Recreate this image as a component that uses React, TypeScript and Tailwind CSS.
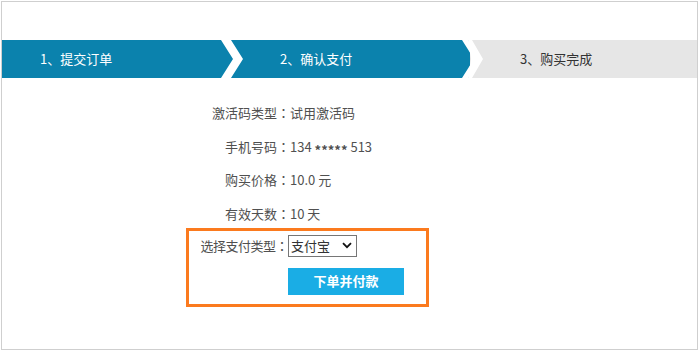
import React from "react";

const font = { fontFamily: '"Noto Sans CJK SC", "Noto Sans", sans-serif' };

function Colon() {
  return <span className="font-['Noto_Sans_CJK_JP',sans-serif]">：</span>;
}

function Row({ label, value }: { label: string; value: React.ReactNode }) {
  return (
    <div className="flex h-5 items-center text-[13px] text-[#505050]">
      <div className="w-[104px] text-right">
        {label}
        <Colon />
      </div>
      <div>{value}</div>
    </div>
  );
}

export default function App() {
  return (
    <div className="h-[351px] w-[700px] bg-white pl-px pt-px" style={font}>
      <div className="relative h-[349px] w-[697px] border border-[#cfcfcf]">
        {/* step bar */}
        <div className="relative mt-[38px] flex h-[38px] text-[13px]">
          <div className="flex w-[228px] items-center bg-[#0b82ad] pl-[38px] text-white">1、提交订单</div>
          <div className="flex w-[240px] items-center bg-[#0b82ad] pl-[50px] text-white">2、确认支付</div>
          <div className="flex flex-1 items-center bg-[#e6e6e6] pl-[50px] text-[#333]">3、购买完成</div>
          <svg className="absolute left-0 top-0" width="695" height="38" viewBox="0 0 695 38">
            <polygon points="219,0 229,0 241,19 229,38 219,38 231,19" fill="#ffffff" />
            <polygon points="466,0 469,19 466,38 470,38 481,19 470,0" fill="#ffffff" />
            <polygon points="460,0 466,0 478,19 466,38 460,38 472,19" fill="#ffffff" />
          </svg>
        </div>

        {/* form */}
        <div className="ml-[184px] mt-[25px] flex flex-col gap-[13.5px]">
          <Row label="激活码类型" value="试用激活码" />
          <Row
            label="手机号码"
            value={
              <>
                134 <span className="inline-block translate-y-[3px] font-bold">*****</span> 513
              </>
            }
          />
          <Row label="购买价格" value="10.0 元" />
          <Row label="有效天数" value="10 天" />
        </div>

        <div className="ml-[184px] mt-[4px] h-[79px] w-[243px] border-[3px] border-[#fb7a1e] pt-[4px]">
          <div className="flex h-[22px] items-center text-[13px] text-[#505050]">
            <div className="w-[99px] text-right tracking-[-0.5px]">
              选择支付类型
              <Colon />
            </div>
            <div className="relative">
              <select className="h-[22px] w-[69px] appearance-none border border-[#767676] bg-white pl-[2px] text-[13px] text-[#333] outline-none">
                <option>支付宝</option>
              </select>
              <svg className="pointer-events-none absolute right-[5px] top-[7px]" width="10" height="7" viewBox="0 0 10 7">
                <path d="M1 1.2 L5 5.2 L9 1.2" fill="none" stroke="#111" strokeWidth="1.8" />
              </svg>
            </div>
          </div>
          <div className="ml-[99px] mt-[11px]">
            <button className="flex h-[27px] w-[116px] items-center justify-center bg-[#1aade5] text-[13px] font-bold text-white">
              下单并付款
            </button>
          </div>
        </div>
      </div>
    </div>
  );
}
